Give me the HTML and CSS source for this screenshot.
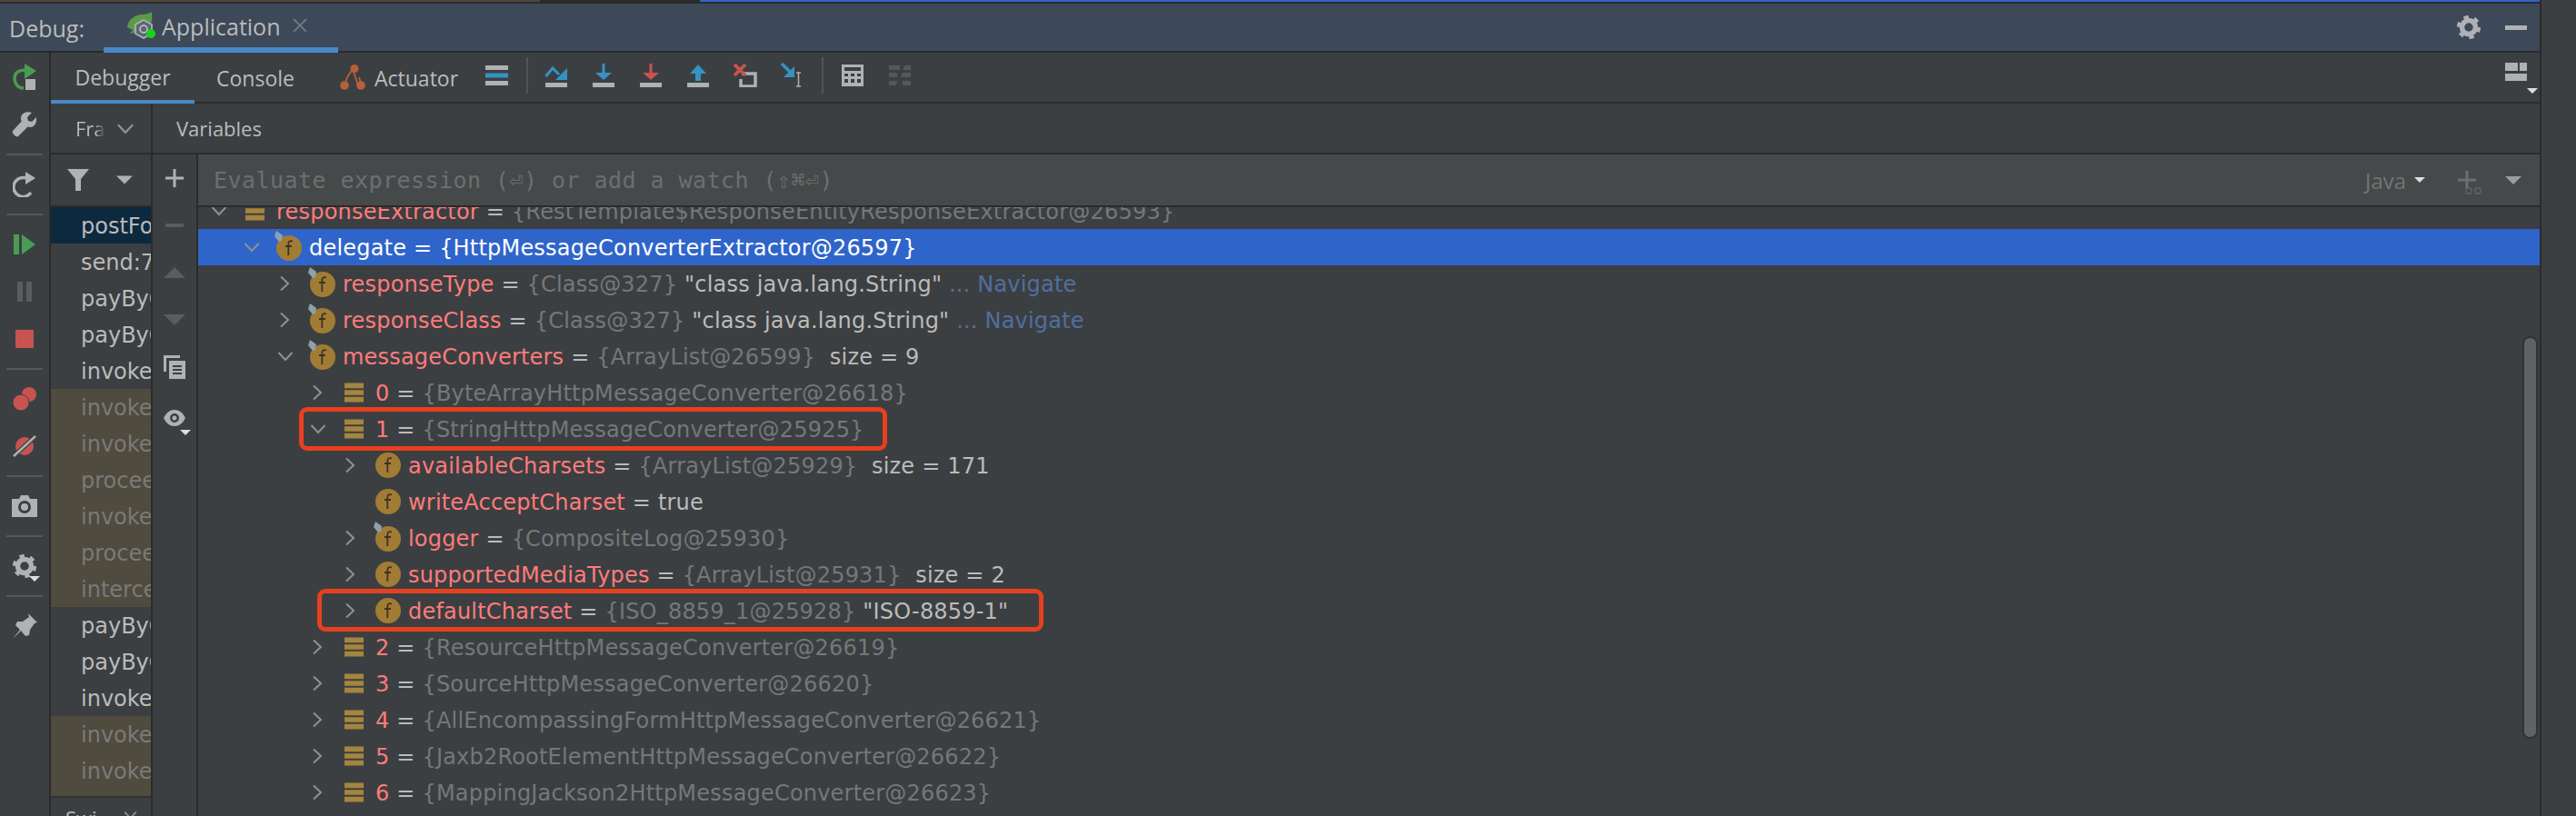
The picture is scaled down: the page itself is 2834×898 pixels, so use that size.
FILE: index.html
```html
<!DOCTYPE html>
<html lang="en">
<head>
<meta charset="utf-8">
<title>Debug: Application</title>
<link rel="stylesheet" href="styles.css">
</head>
<body>
<svg class="defs" width="0" height="0">
  <symbol id="gear" viewBox="0 0 26 26"><circle cx="13" cy="13" r="7.5" fill="none" stroke="currentColor" stroke-width="5.5"/><circle cx="13" cy="13" r="11" fill="none" stroke="currentColor" stroke-width="4.2" stroke-dasharray="5.2 6.32"/></symbol>
  <symbol id="tri" viewBox="0 0 12 6"><path d="M0 0h12L6 6z" fill="currentColor"/></symbol>
  <symbol id="chev-r" viewBox="0 0 12 18"><path d="M2 1.5 10 9 2 16.5" fill="none" stroke="#8f9193" stroke-width="2"/></symbol>
  <symbol id="chev-d" viewBox="0 0 18 12"><path d="M1.5 2 9 10 16.5 2" fill="none" stroke="#8f9193" stroke-width="2"/></symbol>
  <symbol id="bars" viewBox="0 0 22 22"><path d="M0 0h22v6H0zM0 8h22v6H0zM0 16h22v6H0z" fill="#a5853f"/></symbol>
  <symbol id="fi" viewBox="0 0 30 30"><circle cx="15" cy="15" r="14" fill="#a17c35"/><path d="M19 7.5c-3-1-4.700.2-4.700 3V23M11 13h7" fill="none" stroke="#3c3324" stroke-width="1.800"/></symbol>
  <symbol id="fpin" viewBox="0 0 38 36"><circle cx="22" cy="21" r="14" fill="#a17c35"/><path d="M26 13.500c-3-1-4.700.2-4.700 3V29M18 19h7" fill="none" stroke="#3c3324" stroke-width="1.800"/><path d="M6 8 8 2l7 5-1 6-3 1z" fill="#8fa0ad"/></symbol>
</svg>
<div class="app">
  <div class="main">
    <div class="strip"><i class="seg seg-a"></i><i class="seg seg-b"></i><i class="seg seg-c"></i></div>
    <header class="titlebar">
      <span class="title-label">Debug:</span>
      <div class="title-tab">
        <svg class="spring" viewBox="0 0 34 30" width="34" height="30"><path d="M0 17C1 8 9 3 16 3c4 0 8-1 11-3 1 6 0 12-2 16l-12 9-5-2-5 1 3-4z" fill="#5b9a48"/><path d="M18 9l9 5v10l-9 5-9-5V14z" fill="#5d6874" stroke="#a9b0b7" stroke-width="1.800"/><circle cx="18" cy="19" r="4" fill="none" stroke="#c8ccd0" stroke-width="1.500"/><circle cx="26" cy="24" r="5" fill="#16d516"/></svg>
        <span class="title-name">Application</span>
        <svg class="title-x" viewBox="0 0 16 16" width="16" height="16"><path d="M1 1l14 14M15 1 1 15" stroke="#6f7680" stroke-width="1.800"/></svg>
      </div>
      <span class="spacer"></span>
      <svg class="gear-t" width="26" height="26"><use href="#gear"/></svg>
      <span class="minimize"></span>
    </header>
    <div class="body">
      <nav class="leftbar">
        <div class="lb"><svg viewBox="0 0 28 30" width="28" height="30"><path d="M13 27C5 27 3 20 3 16 3 10 8 7 15 7" fill="none" stroke="#499c54" stroke-width="3.500"/><path d="M14 0l13 8-13 9z" fill="#499c54"/><rect x="15" y="17" width="11" height="12" fill="#afb1b3"/></svg></div>
        <div class="lb"><svg viewBox="0 0 28 28" width="28" height="28"><path d="M27 6l-5 5-4-1-1-4 5-5C17-1 11 1 10 6c-.3 2 0 3 .7 4.500L1 21c-2 2 4 8 6 6L17.500 16.500c2 .7 4 .8 6-.5 3-2 4-6 3.500-10z" fill="#afb1b3"/></svg></div>
        <div class="ls"></div>
        <div class="lb"><svg viewBox="0 0 26 28" width="26" height="28"><path d="M20 23A10.500 10.500 0 1 1 13 6.500h4" fill="none" stroke="#afb1b3" stroke-width="3.500"/><path d="M14 0l11 7-11 7z" fill="#afb1b3"/></svg></div>
        <div class="ls"></div>
        <div class="lb"><svg viewBox="0 0 24 24" width="24" height="24"><path d="M0 1h6v22H0zM9 1l15 11L9 23z" fill="#499c54"/></svg></div>
        <div class="lb"><svg viewBox="0 0 16 22" width="16" height="22"><path d="M0 0h6v22H0zM10 0h6v22h-6z" fill="#5a5d5f"/></svg></div>
        <div class="lb"><svg viewBox="0 0 20 20" width="20" height="20"><rect width="20" height="20" fill="#c75450"/></svg></div>
        <div class="ls"></div>
        <div class="lb"><svg viewBox="0 0 26 26" width="26" height="26"><circle cx="18" cy="8" r="8" fill="#c75450"/><circle cx="9" cy="17" r="9" fill="#c75450" stroke="#3c3f41" stroke-width="1"/></svg></div>
        <div class="lb"><svg viewBox="0 0 26 24" width="26" height="24"><circle cx="13" cy="12" r="10" fill="#c75450"/><path d="M1 23 25 1" stroke="#3c3f41" stroke-width="5"/><path d="M1 23 25 1" stroke="#afb1b3" stroke-width="2.500"/></svg></div>
        <div class="ls"></div>
        <div class="lb"><svg viewBox="0 0 28 24" width="28" height="24"><path d="M0 4h8l2-4h8l2 4h8v20H0z" fill="#afb1b3"/><circle cx="14" cy="13" r="5.500" fill="none" stroke="#3c3f41" stroke-width="3"/></svg></div>
        <div class="ls"></div>
        <div class="lb lb-menu"><svg width="26" height="26"><use href="#gear"/></svg><svg class="mini-tri" width="12" height="6"><use href="#tri"/></svg></div>
        <div class="ls"></div>
        <div class="lb"><svg viewBox="0 0 28 28" width="28" height="28"><path d="M18 0l10 10-3 1-5 7-1 6-4 1-5-6L1 28l8-10-5-5 2-4h6l7-5z" fill="#afb1b3"/></svg></div>
      </nav>
      <div class="content">
        <div class="toolbar">
          <div class="tab tab-active">Debugger</div>
          <div class="tab tab-console">Console</div>
          <svg class="act-icon" viewBox="0 0 28 28" width="28" height="28"><path d="M5 23 8 14 14 5l6 18M24 23l-3-9" fill="none" stroke="#b5603a" stroke-width="1.800"/><circle cx="16" cy="4.500" r="4.500" fill="#b5603a"/><circle cx="5" cy="23" r="4.800" fill="#b5603a"/><circle cx="23" cy="23" r="4.800" fill="#b5603a"/></svg>
          <div class="tab-act">Actuator</div>
          <svg class="ti ti-list" viewBox="0 0 25 22" width="25" height="22"><path d="M0 0h25v5H0zM0 17h25v5H0z" fill="#afb1b3"/><path d="M0 8.500h25v5H0z" fill="#3592c4"/></svg>
          <i class="tsep tsep-a"></i>
          <svg class="ti ti-over" viewBox="0 0 26 26" width="26" height="26"><path d="M1.500 14 9 5l7 7" fill="none" stroke="#3592c4" stroke-width="3"/><path d="M25 5v13H12z" fill="#3592c4"/><path d="M1 21h24v5H1z" fill="#afb1b3"/></svg>
          <svg class="ti ti-step" viewBox="0 0 24 26" width="24" height="26"><path d="M10.500 0h3v12h-3z" fill="#3592c4"/><path d="M3 10h18l-9 8z" fill="#3592c4"/><path d="M0 21h24v5H0z" fill="#afb1b3"/></svg>
          <svg class="ti ti-step" viewBox="0 0 24 26" width="24" height="26"><path d="M10.500 0h3v12h-3z" fill="#c75450"/><path d="M3 10h18l-9 8z" fill="#c75450"/><path d="M0 21h24v5H0z" fill="#afb1b3"/></svg>
          <svg class="ti ti-step" viewBox="0 0 24 26" width="24" height="26"><path d="M12 1l9 10h-6v8H9v-8H3z" fill="#3592c4"/><path d="M0 21h24v5H0z" fill="#afb1b3"/></svg>
          <svg class="ti ti-drop" viewBox="0 0 26 26" width="26" height="26"><path d="M9 11h15v14H8v-8" fill="none" stroke="#afb1b3" stroke-width="3.500"/><path d="M1 1l12 12M13 1 1 13" stroke="#c75450" stroke-width="3.800"/></svg>
          <svg class="ti ti-run" viewBox="0 0 28 28" width="28" height="28"><path d="M1 1l11 11" stroke="#3592c4" stroke-width="3.500"/><path d="M15 4v12H3z" fill="#3592c4"/><path d="M17 11h5M19.500 11v15M17 26h5" stroke="#afb1b3" stroke-width="1.500" fill="none"/></svg>
          <i class="tsep tsep-b"></i>
          <svg class="ti ti-calc" viewBox="0 0 24 24" width="24" height="24"><path fill-rule="evenodd" d="M0 0h24v24H0zM3 3v4h18V3zM3 10v3h4v-3zM10 10v3h4v-3zM17 10v3h4v-3zM3 16v4h4v-4zM10 16v4h4v-4zM17 16v4h4v-4z" fill="#afb1b3"/></svg>
          <svg class="ti ti-trace" viewBox="0 0 24 26" width="24" height="26"><path d="M0 2h12v5H0zM15 2h9v5h-9zM0 10h9v5H0zM12 10h12v5H12zM0 19h9v5H0zM15 19h9v5h-9z" fill="#55585a"/><path d="M17 0 8 26" stroke="#3c3f41" stroke-width="2"/></svg>
          <span class="spacer"></span>
          <div class="layout-btn"><svg viewBox="0 0 24 20" width="24" height="20"><path d="M0 0h14v9H0zM16 0h8v9h-8zM0 12h24v8H0z" fill="#afb1b3"/></svg><svg class="mini-tri" width="12" height="6"><use href="#tri"/></svg></div>
        </div>
        <div class="split">
          <aside class="frames">
            <div class="frames-head"><span class="fade">Fra</span><svg width="20" height="13"><use href="#chev-d"/></svg></div>
            <div class="filter-row">
              <svg viewBox="0 0 24 24" width="24" height="24"><path d="M0 0h24L15 11v13H9V11z" fill="#afb1b3"/></svg>
              <svg class="filter-tri" width="18" height="10"><use href="#tri"/></svg>
            </div>
            <ul class="flist">
              <li class="cur">postFo</li>
              <li>send:7</li>
              <li>payByC</li>
              <li>payByC</li>
              <li>invoke</li>
              <li class="lib">invoke</li>
              <li class="lib">invoke</li>
              <li class="lib">procee</li>
              <li class="lib">invoke</li>
              <li class="lib">procee</li>
              <li class="lib">interce</li>
              <li>payByC</li>
              <li>payByC</li>
              <li>invoke</li>
              <li class="lib">invoke</li>
              <li class="lib lib-end">invoke</li>
            </ul>
            <div class="swi"><span>Swi</span><svg width="15" height="10"><use href="#chev-d"/></svg></div>
          </aside>
          <section class="vars">
            <div class="vars-head">Variables</div>
            <div class="vars-body">
              <div class="gutter">
                <div class="gb"><svg viewBox="0 0 20 20" width="20" height="20"><path d="M8.500 0h3v20h-3zM0 8.500h20v3H0z" fill="#afb1b3"/></svg></div>
                <div class="gb"><svg viewBox="0 0 20 4" width="20" height="4"><path d="M0 0h20v4H0z" fill="#5a5d5f"/></svg></div>
                <div class="gb"><svg viewBox="0 0 24 12" width="24" height="12"><path d="M12 0l12 12H0z" fill="#5a5d5f"/></svg></div>
                <div class="gb"><svg viewBox="0 0 24 12" width="24" height="12"><path d="M0 0h24L12 12z" fill="#5a5d5f"/></svg></div>
                <div class="gb"><svg viewBox="0 0 24 26" width="24" height="26"><path d="M0 0h18v3H3v15H0z" fill="#afb1b3"/><path fill-rule="evenodd" d="M6 6h18v20H6zM10 11v2h10v-2zM10 15v2h10v-2zM10 19v2h10v-2z" fill="#afb1b3"/></svg></div>
                <div class="gb gb-eye"><svg viewBox="0 0 24 18" width="24" height="18"><path fill-rule="evenodd" d="M0 9C3 3 7 0 12 0s9 3 12 9c-3 6-7 9-12 9S3 15 0 9zm12 5a5 5 0 1 0 0-10 5 5 0 0 0 0 10zm0-2.500a2.500 2.500 0 1 1 0-5 2.500 2.500 0 0 1 0 5z" fill="#afb1b3"/></svg><svg class="mini-tri" width="12" height="6"><use href="#tri"/></svg></div>
              </div>
              <div class="tree-col">
                <div class="evalbar">
                  <span class="eval-text">Evaluate expression (⏎) or add a watch (⇧⌘⏎)</span>
                  <span class="spacer"></span>
                  <span class="java">Java</span>
                  <svg class="java-tri" width="12" height="6"><use href="#tri"/></svg>
                  <svg class="watch" viewBox="0 0 28 26" width="28" height="26"><path d="M8.500 0h3v20h-3zM0 8.500h20v3H0z" fill="#6d6f70"/><circle cx="12" cy="22" r="3.200" fill="none" stroke="#5f6162" stroke-width="1.500"/><circle cx="22" cy="22" r="3.200" fill="none" stroke="#5f6162" stroke-width="1.500"/></svg>
                  <svg class="eval-tri" width="18" height="11"><use href="#tri"/></svg>
                </div>
                <div class="tree">
                  <div class="row d0 clip"><svg class="ar" width="18" height="12"><use href="#chev-d"/></svg><svg class="ic-bars" width="21" height="22"><use href="#bars"/></svg><span class="n">responseExtractor</span><span class="e"> = </span><span class="v">{RestTemplate$ResponseEntityResponseExtractor@26593}</span></div>
                  <div class="row d1 sel"><svg class="ar" width="18" height="12"><use href="#chev-d"/></svg><svg class="ic-pin" width="38" height="36"><use href="#fpin"/></svg><span class="n">delegate</span><span class="e"> = </span><span class="v">{HttpMessageConverterExtractor@26597}</span></div>
                  <div class="row d2"><svg class="ar-r" width="12" height="18"><use href="#chev-r"/></svg><svg class="ic-pin" width="38" height="36"><use href="#fpin"/></svg><span class="n">responseType</span><span class="e"> = </span><span class="v">{Class@327}</span><span class="s"> "class java.lang.String"</span><span class="dim"> ... </span><span class="nav">Navigate</span></div>
                  <div class="row d2"><svg class="ar-r" width="12" height="18"><use href="#chev-r"/></svg><svg class="ic-pin" width="38" height="36"><use href="#fpin"/></svg><span class="n">responseClass</span><span class="e"> = </span><span class="v">{Class@327}</span><span class="s"> "class java.lang.String"</span><span class="dim"> ... </span><span class="nav">Navigate</span></div>
                  <div class="row d2"><svg class="ar" width="18" height="12"><use href="#chev-d"/></svg><svg class="ic-pin" width="38" height="36"><use href="#fpin"/></svg><span class="n">messageConverters</span><span class="e"> = </span><span class="v">{ArrayList@26599}</span><span class="s"> &nbsp;size = 9</span></div>
                  <div class="row d3"><svg class="ar-r" width="12" height="18"><use href="#chev-r"/></svg><svg class="ic-bars" width="21" height="22"><use href="#bars"/></svg><span class="n">0</span><span class="e"> = </span><span class="v">{ByteArrayHttpMessageConverter@26618}</span></div>
                  <div class="row d3"><svg class="ar" width="18" height="12"><use href="#chev-d"/></svg><svg class="ic-bars" width="21" height="22"><use href="#bars"/></svg><span class="n">1</span><span class="e"> = </span><span class="v">{StringHttpMessageConverter@25925}</span></div>
                  <div class="row d4"><svg class="ar-r" width="12" height="18"><use href="#chev-r"/></svg><svg class="ic-f" width="30" height="30"><use href="#fi"/></svg><span class="n">availableCharsets</span><span class="e"> = </span><span class="v">{ArrayList@25929}</span><span class="s"> &nbsp;size = 171</span></div>
                  <div class="row d4"><i class="ar-none"></i><svg class="ic-f" width="30" height="30"><use href="#fi"/></svg><span class="n">writeAcceptCharset</span><span class="e"> = </span><span class="s">true</span></div>
                  <div class="row d4"><svg class="ar-r" width="12" height="18"><use href="#chev-r"/></svg><svg class="ic-pin" width="38" height="36"><use href="#fpin"/></svg><span class="n">logger</span><span class="e"> = </span><span class="v">{CompositeLog@25930}</span></div>
                  <div class="row d4"><svg class="ar-r" width="12" height="18"><use href="#chev-r"/></svg><svg class="ic-f" width="30" height="30"><use href="#fi"/></svg><span class="n">supportedMediaTypes</span><span class="e"> = </span><span class="v">{ArrayList@25931}</span><span class="s"> &nbsp;size = 2</span></div>
                  <div class="row d4"><svg class="ar-r" width="12" height="18"><use href="#chev-r"/></svg><svg class="ic-f" width="30" height="30"><use href="#fi"/></svg><span class="n">defaultCharset</span><span class="e"> = </span><span class="v">{ISO_8859_1@25928}</span><span class="s"> "ISO-8859-1"</span></div>
                  <div class="row d3"><svg class="ar-r" width="12" height="18"><use href="#chev-r"/></svg><svg class="ic-bars" width="21" height="22"><use href="#bars"/></svg><span class="n">2</span><span class="e"> = </span><span class="v">{ResourceHttpMessageConverter@26619}</span></div>
                  <div class="row d3"><svg class="ar-r" width="12" height="18"><use href="#chev-r"/></svg><svg class="ic-bars" width="21" height="22"><use href="#bars"/></svg><span class="n">3</span><span class="e"> = </span><span class="v">{SourceHttpMessageConverter@26620}</span></div>
                  <div class="row d3"><svg class="ar-r" width="12" height="18"><use href="#chev-r"/></svg><svg class="ic-bars" width="21" height="22"><use href="#bars"/></svg><span class="n">4</span><span class="e"> = </span><span class="v">{AllEncompassingFormHttpMessageConverter@26621}</span></div>
                  <div class="row d3"><svg class="ar-r" width="12" height="18"><use href="#chev-r"/></svg><svg class="ic-bars" width="21" height="22"><use href="#bars"/></svg><span class="n">5</span><span class="e"> = </span><span class="v">{Jaxb2RootElementHttpMessageConverter@26622}</span></div>
                  <div class="row d3"><svg class="ar-r" width="12" height="18"><use href="#chev-r"/></svg><svg class="ic-bars" width="21" height="22"><use href="#bars"/></svg><span class="n">6</span><span class="e"> = </span><span class="v">{MappingJackson2HttpMessageConverter@26623}</span></div>
                  <i class="mark mark-a"></i>
                  <i class="mark mark-b"></i>
                  <i class="scroll"></i>
                </div>
              </div>
            </div>
          </section>
        </div>
      </div>
    </div>
  </div>
  <div class="rstrip"></div>
</div>
</body>
</html>
```

FILE: styles.css
```css
* { box-sizing: border-box; }
html, body { margin: 0; padding: 0; height: 898px; overflow: hidden; background: #3c3f41; }
body { font-family: "Open Sans", "DejaVu Sans", sans-serif; color: #bbbbbb; }
svg { display: block; flex: none; }
.defs { position: absolute; }
.app { display: flex; height: 898px; }
.main { width: 2794px; display: flex; flex-direction: column; }
.rstrip { flex: 1; border-left: 2px solid #2b2b2b; background: #3c3f41; }
.spacer { flex: 1; }

.strip { height: 4px; display: flex; border-bottom: 2px solid #2b2b2b; flex: none; }
.seg { display: block; height: 2px; }
.seg-a { width: 594px; background: #50493a; }
.seg-b { width: 176px; background: #2b2b2b; }
.seg-c { flex: 1; background: #2f65ca; }

.titlebar { height: 54px; flex: none; display: flex; align-items: center; background: #3d4959; border-bottom: 2px solid #2b2b2b; padding-left: 10px; }
.title-label { font-size: 25px; width: 104px; color: #bbbbbb; margin-top: 2px; }
.title-tab { width: 258px; height: 54px; margin-bottom: -2px; display: flex; align-items: center; padding-left: 26px; border-bottom: 6px solid #4a88c7; }
.spring { margin-right: 4px; }
.title-name { font-size: 25px; color: #bbbbbb; margin-right: 14px; margin-top: 2px; }
.gear-t { color: #afb1b3; margin-right: 27px; }
.minimize { width: 24px; height: 5px; background: #afb1b3; margin-right: 14px; }

.body { flex: 1; display: flex; min-height: 0; }
.leftbar { width: 56px; flex: none; border-right: 2px solid #2b2b2b; padding-top: 1px; display: flex; flex-direction: column; }
.lb { height: 52px; display: flex; align-items: center; justify-content: center; position: relative; }
.ls { height: 14px; display: flex; align-items: center; justify-content: center; }
.ls::before { content: ""; display: block; width: 40px; height: 2px; background: #55585a; }
.mini-tri { position: absolute; color: #dddddd; }
.lb-menu { color: #afb1b3; }
.lb-menu .mini-tri { right: 10px; bottom: 9px; }

.content { flex: 1; min-width: 0; display: flex; flex-direction: column; }
.toolbar { height: 56px; flex: none; display: flex; align-items: center; border-bottom: 2px solid #2b2b2b; position: relative; font-size: 23px; }
.tab { height: 54px; display: flex; align-items: center; color: #bbbbbb; }
.tab-active { width: 158px; justify-content: center; margin-bottom: -2px; height: 56px; border-bottom: 4px solid #4a88c7; padding-top: 2px; }
.tab-console { width: 160px; padding-left: 24px; padding-top: 2px; }
.act-icon { margin-right: 10px; }
.tab-act { color: #bbbbbb; width: 122px; padding-top: 2px; }
.ti { margin-top: -4px; }
.tsep { display: block; width: 2px; height: 40px; background: #515456; margin-top: -4px; }
.tsep-a { margin-left: 20px; margin-right: 18px; }
.ti-step { margin-left: 28px; }
.ti-over + .ti-step { margin-left: 27px; }
.ti-drop { margin-left: 27px; }
.ti-run { margin-left: 26px; }
.tsep-b { margin-left: 17px; margin-right: 20px; }
.ti-trace { margin-left: 28px; }
.layout-btn { position: relative; width: 36px; height: 34px; margin-right: 2px; padding-top: 1px; }
.layout-btn .mini-tri { right: 0; bottom: -1px; }

.split { flex: 1; min-height: 0; display: flex; }
.frames { width: 112px; flex: none; border-right: 2px solid #2b2b2b; display: flex; flex-direction: column; overflow: hidden; }
.frames-head { height: 56px; flex: none; border-bottom: 2px solid #2b2b2b; display: flex; align-items: center; padding-left: 27px; font-size: 22px; }
.fade { width: 45px; background: linear-gradient(90deg, #bbbbbb 50%, #3c3f41 72%); -webkit-background-clip: text; background-clip: text; color: transparent; }
.filter-row { height: 58px; flex: none; border-bottom: 2px solid #2b2b2b; display: flex; align-items: center; padding-left: 18px; }
.filter-tri { margin-left: 30px; color: #afb1b3; }
.flist { list-style: none; margin: 0; padding: 0; flex: none; font-family: "DejaVu Sans", sans-serif; }
.flist li { height: 40px; line-height: 42px; padding-left: 33px; font-size: 24px; white-space: nowrap; overflow: hidden; color: #bbbbbb; }
.flist .cur { background: #0d293e; }
.flist .lib { background: #4f4b3e; color: #7a7a78; }
.flist .lib-end { height: 48px; }
.swi { flex: 1; display: flex; align-items: flex-start; padding: 8px 0 0 16px; font-size: 22px; border-top: 2px solid #323232; line-height: 28px; }
.swi svg { margin: 6px 0 0 29px; }

.vars { flex: 1; min-width: 0; display: flex; flex-direction: column; }
.vars-head { height: 56px; flex: none; border-bottom: 2px solid #2b2b2b; display: flex; align-items: center; padding-left: 26px; font-size: 22px; color: #bbbbbb; }
.vars-body { flex: 1; min-height: 0; display: flex; }
.gutter { width: 50px; flex: none; border-right: 2px solid #2b2b2b; }
.gb { height: 52px; display: flex; align-items: center; justify-content: center; position: relative; }
.gb-eye { margin-top: 4px; }
.gb-eye .mini-tri { right: 6px; bottom: 7px; }

.tree-col { flex: 1; min-width: 0; display: flex; flex-direction: column; }
.evalbar { height: 58px; flex: none; background: #45494a; border-bottom: 2px solid #2b2b2b; display: flex; align-items: center; padding-left: 17px; }
.eval-text { font-family: "DejaVu Sans Mono", monospace; font-size: 25px; letter-spacing: .45px; color: #6c6f70; white-space: nowrap; }
.java { font-size: 24px; color: #727475; width: 54px; }
.java-tri { color: #dddddd; margin-right: 36px; }
.watch { margin-top: 6px; }
.eval-tri { color: #9a9c9e; margin: 0 20px 0 24px; }

.tree { flex: 1; min-height: 0; position: relative; overflow: hidden; }
.row { height: 40px; display: flex; align-items: center; white-space: pre; font-family: "DejaVu Sans", sans-serif; font-size: 24px; letter-spacing: .2px; }
.row span { margin-top: 2px; }
.row.clip { margin-top: -16px; }
.d0 { padding-left: 16px; }
.d1 { padding-left: 52px; }
.d2 { padding-left: 89px; }
.d3 { padding-left: 125px; }
.d4 { padding-left: 161px; }
.ar { width: 18px; margin-left: -2px; margin-right: 17px; }
.ar-r { width: 12px; margin-right: 21px; }
.ar-none { display: block; width: 33px; flex: none; }
.ic-bars { margin: 0 13px 0 3px; }
.ic-f { margin-right: 7px; }
.ic-pin { margin: -4px 6px 0 -7px; }
.n { color: #ff7b7b; }
.e { color: #bbbbbb; }
.v { color: #75777a; }
.s { color: #bbbbbb; }
.dim { color: #5e6e85; }
.nav { color: #4f6f9f; }
.sel { background: #2f65ca; }
.sel .n, .sel .e, .sel .v { color: #ffffff; }

.mark { position: absolute; display: block; border: 5px solid #e8401f; border-radius: 9px; }
.mark-a { left: 111px; top: 220px; width: 647px; height: 48px; }
.mark-b { left: 131px; top: 420px; width: 799px; height: 47px; }
.scroll { position: absolute; right: 2px; top: 142px; width: 17px; height: 443px; background: #606265; border: 2px solid #323335; border-radius: 8px; }
```
